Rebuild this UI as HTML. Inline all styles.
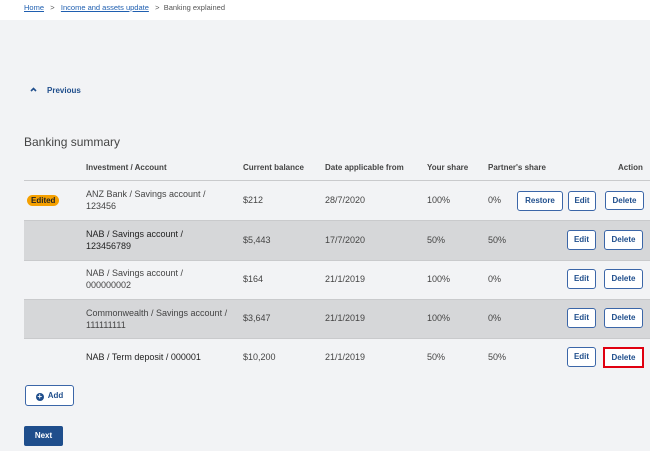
<!DOCTYPE html><html><head><style>
body{margin:0;width:650px;height:451px;background:#f2f3f5;font-family:"Liberation Sans",sans-serif;position:relative;overflow:hidden;color:#444;font-size:9px}
.a{position:absolute;white-space:nowrap}
.hdr{position:absolute;left:0;top:0;width:650px;height:20px;background:#fff}
.bc a{color:#1f5fb0;text-decoration:underline}
.row{position:absolute;left:24px;width:626px;border-top:1px solid #c9cacc}
.g{background:#d6d7d9}
.btn{position:absolute;border:1px solid #3b66a8;border-radius:3px;background:#fff;color:#1f4e8c;font-weight:bold;font-size:8px;text-align:center;box-sizing:border-box}
.h{font-weight:bold;color:#444;font-size:8px}
</style></head><body>
<div class="hdr"></div>
<div class="a bc" style="left:24px;top:3px;font-size:7.5px;color:#555"><a>Home</a> &nbsp; &gt; &nbsp; <a>Income and assets update</a> &nbsp; &gt; &nbsp;Banking explained</div>
<svg class="a" style="left:30px;top:87px" width="7" height="5" viewBox="0 0 7 5"><path d="M1 4 L3.5 1.5 L6 4" fill="none" stroke="#1f4e8c" stroke-width="1.6"/></svg>
<div class="a" style="left:47px;top:86px;color:#1f4e8c;font-weight:bold;font-size:8px">Previous</div>
<div class="a" style="left:24px;top:135px;font-size:12px;color:#444">Banking summary</div>
<div class="a h" style="left:86px;top:163px">Investment / Account</div>
<div class="a h" style="left:243px;top:163px">Current balance</div>
<div class="a h" style="left:325px;top:163px">Date applicable from</div>
<div class="a h" style="left:427px;top:163px">Your share</div>
<div class="a h" style="left:488px;top:163px">Partner's share</div>
<div class="a h" style="left:618px;top:163px">Action</div>

<div class="row" style="top:180px;height:39px"></div>
<div class="row g" style="top:220px;height:39px"></div>
<div class="row" style="top:260px;height:38px"></div>
<div class="row g" style="top:299px;height:38px"></div>
<div class="row" style="top:338px;height:39px;border-bottom:none"></div>

<div class="a" style="left:27px;top:195px;background:#f5a000;color:#222;border-radius:6px;padding:1px 4px;font-size:8px;font-weight:bold">Edited</div>

<div class="a" style="left:86px;top:188px;line-height:12px">ANZ Bank / Savings account /<br>123456</div>
<div class="a" style="left:86px;top:228px;line-height:12px;color:#222">NAB / Savings account /<br>123456789</div>
<div class="a" style="left:86px;top:267px;line-height:12px">NAB / Savings account /<br>000000002</div>
<div class="a" style="left:86px;top:307px;line-height:12px">Commonwealth / Savings account /<br>111111111</div>
<div class="a" style="left:86px;top:352px;color:#222">NAB / Term deposit / 000001</div>

<div class="a" style="left:243px;top:195px">$212</div>
<div class="a" style="left:243px;top:235px">$5,443</div>
<div class="a" style="left:243px;top:274px">$164</div>
<div class="a" style="left:243px;top:313px">$3,647</div>
<div class="a" style="left:243px;top:352px">$10,200</div>

<div class="a" style="left:325px;top:195px">28/7/2020</div>
<div class="a" style="left:325px;top:235px">17/7/2020</div>
<div class="a" style="left:325px;top:274px">21/1/2019</div>
<div class="a" style="left:325px;top:313px">21/1/2019</div>
<div class="a" style="left:325px;top:352px">21/1/2019</div>

<div class="a" style="left:427px;top:195px">100%</div>
<div class="a" style="left:427px;top:235px">50%</div>
<div class="a" style="left:427px;top:274px">100%</div>
<div class="a" style="left:427px;top:313px">100%</div>
<div class="a" style="left:427px;top:352px">50%</div>

<div class="a" style="left:488px;top:195px">0%</div>
<div class="a" style="left:488px;top:235px">50%</div>
<div class="a" style="left:488px;top:274px">0%</div>
<div class="a" style="left:488px;top:313px">0%</div>
<div class="a" style="left:488px;top:352px">50%</div>

<div class="btn" style="left:517px;top:191px;width:46px;height:20px;line-height:18px">Restore</div>
<div class="btn" style="left:568px;top:191px;width:28px;height:20px;line-height:18px">Edit</div>
<div class="btn" style="left:605px;top:191px;width:39px;height:19px;line-height:17px">Delete</div>

<div class="btn" style="left:567px;top:230px;width:29px;height:20px;line-height:18px">Edit</div>
<div class="btn" style="left:604px;top:230px;width:39px;height:20px;line-height:18px">Delete</div>
<div class="btn" style="left:567px;top:269px;width:29px;height:20px;line-height:18px">Edit</div>
<div class="btn" style="left:604px;top:269px;width:39px;height:20px;line-height:18px">Delete</div>
<div class="btn" style="left:567px;top:308px;width:29px;height:20px;line-height:18px">Edit</div>
<div class="btn" style="left:604px;top:308px;width:39px;height:20px;line-height:18px">Delete</div>
<div class="btn" style="left:567px;top:347px;width:29px;height:20px;line-height:18px">Edit</div>
<div class="btn" style="left:603px;top:347px;width:41px;height:21px;line-height:17px;border:2px solid #e00010;border-radius:0">Delete</div>

<div class="btn" style="left:25px;top:385px;width:49px;height:21px;line-height:19px;color:#1f4e8c"><span style="display:inline-block;width:8px;height:8px;border-radius:50%;background:#1f4e8c;color:#fff;font-size:8px;line-height:8px;vertical-align:-1px;margin-right:4px">+</span>Add</div>
<div class="a" style="left:24px;top:426px;width:39px;height:20px;background:#1f4e8c;border-radius:2px;color:#fff;font-weight:bold;font-size:8px;text-align:center;line-height:20px">Next</div>
</body></html>
